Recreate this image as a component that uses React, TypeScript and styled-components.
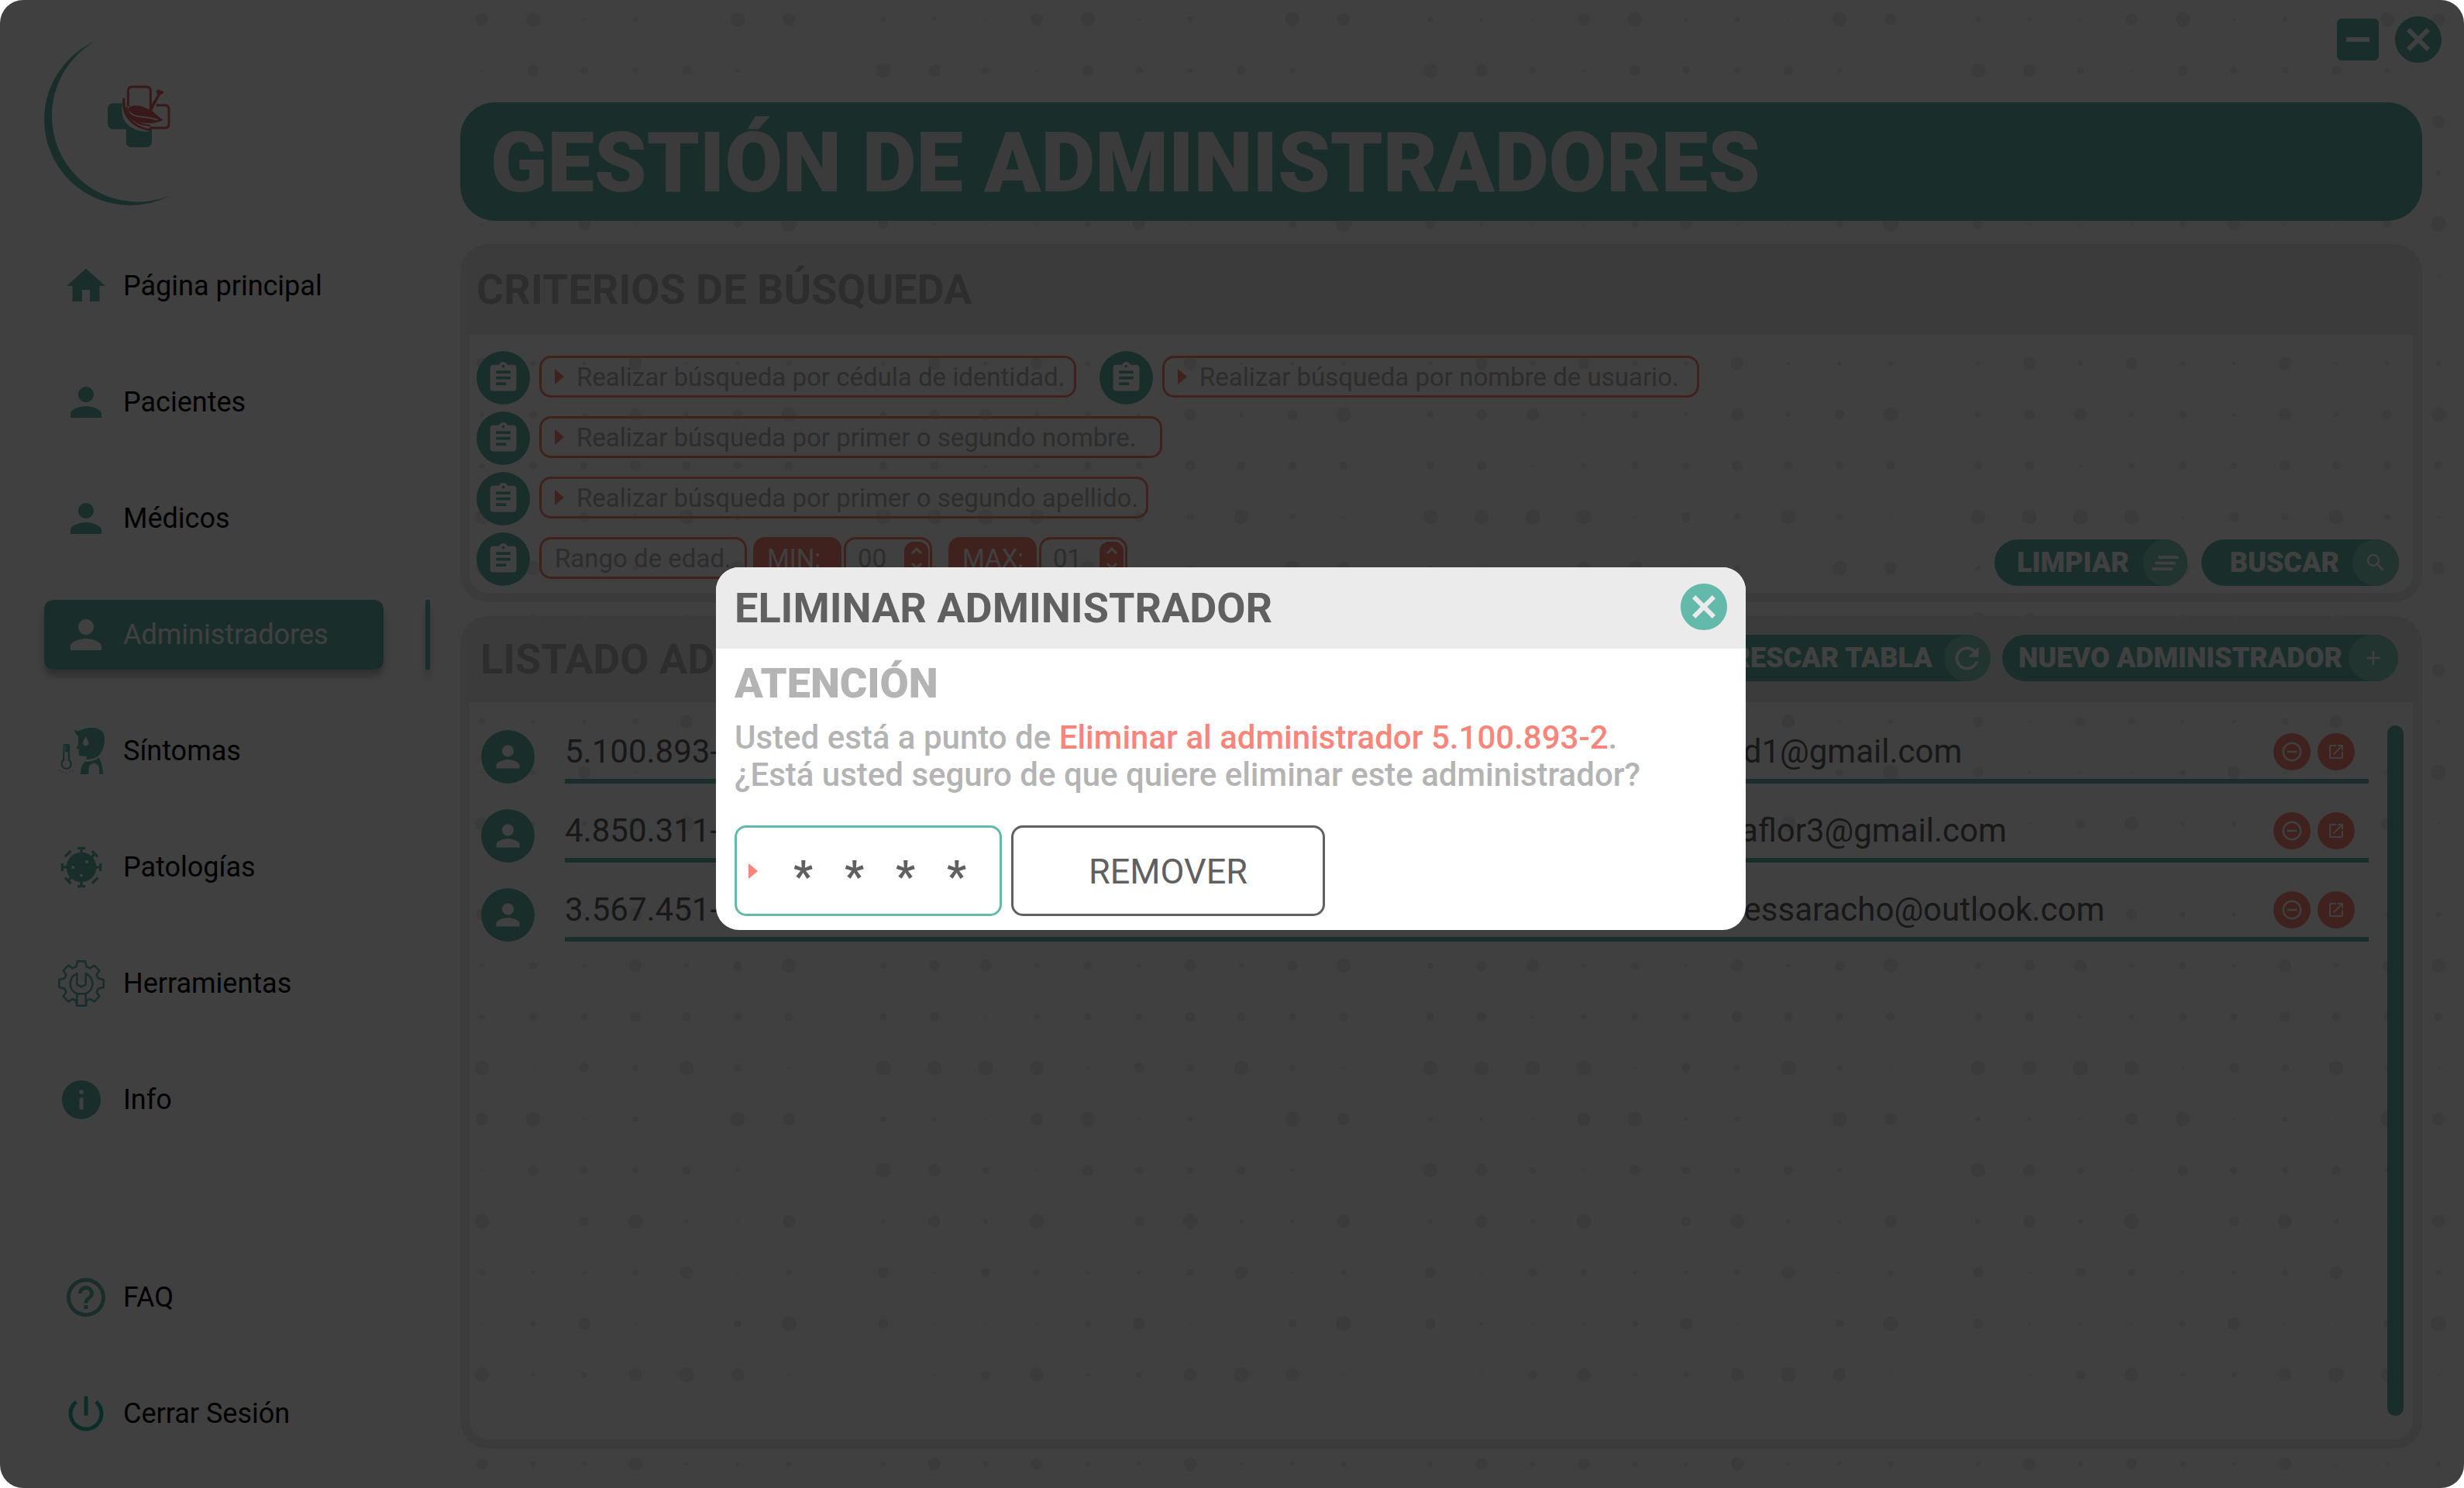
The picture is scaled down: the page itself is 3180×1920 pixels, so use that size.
import React from 'react';
import styled, { createGlobalStyle, css } from 'styled-components';
import {
  MdAdd,
  MdAssignment,
  MdCancel,
  MdClearAll,
  MdHelpOutline,
  MdHome,
  MdIndeterminateCheckBox,
  MdInfo,
  MdOpenInNew,
  MdPerson,
  MdPowerSettingsNew,
  MdRefresh,
  MdRemoveCircleOutline,
  MdSearch,
} from 'react-icons/md';

const color = {
  teal: '#63b9aa',
  tealSoft: '#88d0c0',
  coral: '#fa857a',
  panel: '#ebebeb',
  muted: '#b4b4b4',
  ink: '#606060',
  white: '#ffffff',
};

const GlobalStyle = createGlobalStyle`
  *, *::before, *::after { box-sizing: border-box; }
  body {
    margin: 0;
    background: #ffffff;
    font-family: Roboto, "Liberation Sans", sans-serif;
    font-size: 36px;
    color: #000000;
  }
  button, input { font-family: inherit; margin: 0; }
  button { cursor: pointer; }
`;

const Frame = styled.div`
  position: relative;
  display: flex;
  min-height: 100vh;
  border-radius: 30px;
  overflow: hidden;
  background: ${color.white};
`;

/* ---------- sidebar ---------- */

const Sidebar = styled.aside`
  display: flex;
  flex-direction: column;
  flex: 0 0 594px;
  padding: 48px 39px 51px 57px;
`;

const Logo = styled.svg`
  display: block;
  width: 180px;
  height: 222px;
  margin-bottom: 54px;
  overflow: visible;
`;

const Nav = styled.nav`
  display: flex;
  flex-direction: column;
  flex: 1;
  gap: 60px;
`;

const NavRow = styled.div<{ $pushed?: boolean }>`
  display: flex;
  justify-content: space-between;
  height: 90px;
  ${(p) => p.$pushed && css`margin-top: auto;`}
`;

const activeShadow = css`
  background: ${color.teal};
  box-shadow: 0 9px 9px rgba(0, 0, 0, 0.25);
`;

const NavLink = styled.a<{ $active?: boolean }>`
  display: flex;
  align-items: center;
  width: 438px;
  border-radius: 12px;
  color: #000000;
  text-decoration: none;
  ${(p) => p.$active && activeShadow}
  ${(p) => p.$active && css`color: ${color.white};`}
`;

const NavMarker = styled.span`
  width: 6px;
  border-radius: 2px;
  ${activeShadow}
`;

const NavIcon = styled.span<{ $wide?: boolean; $active?: boolean }>`
  display: flex;
  width: 102px;
  padding-left: ${(p) => (p.$wide ? 18 : 24)}px;
  color: ${(p) => (p.$active ? color.white : color.teal)};
  svg { width: 60px; height: 60px; }
`;

const PowerIcon = styled(MdPowerSettingsNew)`
  color: #28b39a;
`;

/* ---------- main column ---------- */

const Main = styled.main`
  position: relative;
  display: flex;
  flex: 1;
  flex-direction: column;
  min-width: 0;
`;

const Dots = styled.svg`
  position: absolute;
  inset: 0;
  width: 100%;
  height: 100%;
  fill: ${color.panel};
`;

const WindowBar = styled.header`
  position: relative;
  display: flex;
  justify-content: flex-end;
  gap: 6px;
  height: 132px;
  padding: 15px 23px 0 0;
`;

const IconButton = styled.button`
  display: block;
  width: 72px;
  height: 72px;
  padding: 0;
  border: 0;
  background: none;
  color: ${color.teal};
  svg { display: block; width: 72px; height: 72px; }
`;

const Content = styled.div`
  position: relative;
  display: flex;
  flex: 1;
  flex-direction: column;
  padding: 0 54px 51px 0;
`;

const PageTitle = styled.h1`
  margin: 0 0 30px;
  padding: 4px 0 0 39px;
  border-radius: 45px;
  background: ${color.teal};
  color: ${color.panel};
  font-size: 108px;
  font-weight: 900;
  line-height: 149px;
`;

const Panel = styled.section<{ $fill?: boolean }>`
  display: flex;
  flex-direction: column;
  flex: ${(p) => (p.$fill ? '1' : 'none')};
  border: 12px solid ${color.panel};
  border-top: 0;
  border-radius: 36px;
  overflow: hidden;
  & + & { margin-top: 18px; }
`;

const PanelHeader = styled.div<{ $tall?: boolean }>`
  display: flex;
  align-items: center;
  justify-content: space-between;
  height: ${(p) => (p.$tall ? 111 : 117)}px;
  padding: 0 19px 3px ${(p) => (p.$tall ? 14 : 9)}px;
  background: ${color.panel};
`;

const headingText = css`
  margin: 0;
  padding-top: 4px;
  font-size: 54px;
  font-weight: 700;
  line-height: 66px;
`;

const PanelTitle = styled.h2`
  ${headingText}
  color: ${color.muted};
`;

const Actions = styled.div<{ $gap: number }>`
  display: flex;
  gap: ${(p) => p.$gap}px;
`;

const Pill = styled.button<{ $left: number; $gap: number }>`
  display: flex;
  align-items: center;
  gap: ${(p) => p.$gap}px;
  height: 60px;
  padding: 0 0 0 ${(p) => p.$left}px;
  border: 0;
  border-radius: 30px;
  background: ${color.teal};
  color: ${color.white};
  font-size: 36px;
  font-weight: 900;
  white-space: nowrap;
`;

const PillIcon = styled.span<{ $width: number; $size: number }>`
  display: flex;
  align-items: center;
  justify-content: center;
  width: ${(p) => p.$width}px;
  height: 60px;
  border-radius: 50%;
  background: ${color.tealSoft};
  svg { width: ${(p) => p.$size}px; height: ${(p) => p.$size}px; }
`;

/* ---------- search form ---------- */

const SearchForm = styled.form`
  display: flex;
  align-items: flex-end;
  justify-content: space-between;
  padding: 21px 18px 9px 9px;
`;

const Fields = styled.div`
  display: flex;
  flex-direction: column;
  gap: 9px;
`;

const FieldRow = styled.div`
  display: flex;
  gap: 30px;
`;

const Field = styled.div`
  display: flex;
  gap: 12px;
`;

const Disc = styled.span`
  display: flex;
  align-items: center;
  justify-content: center;
  width: 69px;
  height: 69px;
  border-radius: 50%;
  background: ${color.teal};
  color: ${color.white};
  svg { width: 45px; height: 45px; }
`;

const boxStyle = css`
  display: flex;
  align-items: center;
  height: 54px;
  margin-top: 6px;
  border: 3px solid ${color.coral};
  border-radius: 15px;
  font-size: 33px;
`;

const FieldBox = styled.label<{ $width: number }>`
  ${boxStyle}
  gap: 16px;
  width: ${(p) => p.$width}px;
  padding-left: 17px;
  color: ${color.muted};
`;

const FieldInput = styled.input`
  flex: 1;
  min-width: 0;
  padding: 0;
  border: 0;
  outline: 0;
  background: none;
  color: ${color.muted};
  font-size: 33px;
  &::placeholder { color: ${color.muted}; opacity: 1; }
`;

const Arrow = styled.svg`
  flex: none;
  width: 12px;
  height: 20px;
  fill: ${color.coral};
`;

const AgeGroup = styled.div`
  display: flex;
  gap: 8px;
`;

const AgePair = styled.div`
  display: flex;
  gap: 3px;
  & + & { margin-left: 13px; }
`;

const AgeLabel = styled.label`
  ${boxStyle}
  width: 114px;
  padding-left: 15px;
  background: ${color.coral};
  color: ${color.white};
`;

const AgeBox = styled.div`
  ${boxStyle}
  width: 114px;
  padding: 0 2px 0 15px;
`;

const Stepper = styled.span`
  display: flex;
  flex-direction: column;
  width: 31px;
  height: 42px;
  border-radius: 12px;
  overflow: hidden;
  background: ${color.coral};
`;

const StepButton = styled.button`
  display: flex;
  flex: 1;
  align-items: center;
  justify-content: center;
  padding: 0;
  border: 0;
  background: none;
  svg { width: 18px; height: 12px; fill: none; stroke: ${color.white}; stroke-width: 3; }
`;

/* ---------- table ---------- */

const ListBody = styled.div`
  display: flex;
  flex: 1;
  align-items: flex-start;
  gap: 24px;
  padding: 3px 12px 0 15px;
`;

const Table = styled.table`
  flex: 1;
  table-layout: fixed;
  border-collapse: separate;
  border-spacing: 0 33px;
  color: ${color.ink};
  font-size: 42px;
`;

const DiscCell = styled.td`
  width: 108px;
  padding: 0;
`;

const Cell = styled.td<{ $width?: number }>`
  width: ${(p) => (p.$width ? `${p.$width}px` : 'auto')};
  height: 69px;
  padding: 1px 0 8px;
  border-bottom: 6px solid ${color.teal};
  line-height: 54px;
  white-space: nowrap;
`;

const RowActions = styled.div`
  display: flex;
  justify-content: flex-end;
  gap: 9px;
  padding-right: 18px;
`;

const RowButton = styled.button<{ $size: number }>`
  display: flex;
  align-items: center;
  justify-content: center;
  width: 48px;
  height: 48px;
  padding: 0;
  border: 0;
  border-radius: 50%;
  background: ${color.coral};
  color: ${color.white};
  svg { width: ${(p) => p.$size}px; height: ${(p) => p.$size}px; }
`;

const ScrollThumb = styled.div`
  align-self: stretch;
  width: 21px;
  margin: 27px 0 30px;
  border-radius: 11px;
  background: ${color.teal};
`;

/* ---------- modal ---------- */

const Overlay = styled.div`
  position: absolute;
  inset: 0;
  display: flex;
  align-items: center;
  justify-content: center;
  padding: 12px 3px 0 0;
  background: rgba(0, 0, 0, 0.75);
`;

const Modal = styled.section`
  width: 1329px;
  border-radius: 30px;
  overflow: hidden;
  background: ${color.white};
`;

const ModalHeader = styled.div`
  display: flex;
  align-items: center;
  justify-content: space-between;
  height: 105px;
  padding: 0 18px 3px 24px;
  background: ${color.panel};
`;

const ModalTitle = styled.h2`
  ${headingText}
  color: ${color.ink};
`;

const ModalBody = styled.form`
  padding: 12px 24px 18px;
`;

const Warning = styled.h3`
  margin: 0 0 13px;
  color: ${color.muted};
  font-size: 54px;
  font-weight: 900;
  line-height: 66px;
`;

const Message = styled.p`
  margin: 0 0 41px;
  color: ${color.muted};
  font-size: 42px;
  font-weight: 500;
  line-height: 48px;
  strong { color: ${color.coral}; font-weight: 500; }
`;

const ModalActions = styled.div`
  display: flex;
  gap: 12px;
`;

const PinBox = styled.label`
  display: flex;
  align-items: center;
  gap: 46px;
  width: 345px;
  height: 117px;
  padding-left: 15px;
  border: 3px solid ${color.teal};
  border-radius: 15px;
`;

const PinInput = styled.input`
  flex: 1;
  min-width: 0;
  padding: 14px 0 0;
  border: 0;
  outline: 0;
  background: none;
  color: ${color.ink};
  font-size: 55px;
  font-weight: 700;
`;

const RemoveButton = styled.button`
  width: 405px;
  height: 117px;
  padding: 2px 0 0;
  border: 3px solid ${color.ink};
  border-radius: 15px;
  background: ${color.white};
  color: ${color.ink};
  font-size: 45px;
`;

/* ---------- drawings ---------- */

const dotTile = [
  [3, 8, 3.5, 7.5, 3.5, 2.5, 8.5, 2, 2.5, 3.5],
  [4, 7, 8, 3, 5, 2.5, 8, 3, 6.5, 9.5],
  [5, 6, 2, 3.5, 5, 4.5, 7, 5.5, 5, 5.5],
  [9.5, 9.5, 10, 9.5, 1.5, 6.5, 4.5, 9.5, 4, 1.5],
  [3.5, 2.5, 1.5, 8, 9.5, 2, 3.5, 1, 9.5, 8],
  [9.5, 8, 4.5, 1.5, 7, 5, 4, 6, 3, 0],
  [3, 8, 3, 10, 0, 6.5, 9.5, 3, 2, 8.5],
  [7, 1.5, 6, 4.5, 2.5, 2.5, 4, 8.5, 1.5, 3.5],
  [6.5, 2, 1.5, 1.5, 4, 8, 1.5, 1, 5, 10],
  [0, 1.5, 6, 9, 3, 3.5, 8.5, 10, 8.5, 1.5],
];

const DotPattern = () => (
  <Dots aria-hidden="true">
    <defs>
      <g id="dot-tile">
        {dotTile.map((row, y) =>
          row.map((r, x) => <circle key={`${x}-${y}`} cx={x * 66} cy={y * 66} r={r} />),
        )}
      </g>
    </defs>
    {[-170, 546, 1252, 1959].map((x) =>
      [-239, 469, 1180, 1889].map((y) => <use key={`${x}-${y}`} href="#dot-tile" x={x} y={y} />),
    )}
  </Dots>
);

const BrandLogo = () => (
  <Logo viewBox="57 48 180 222" role="img" aria-label="Logo">
    <path
      fill={color.teal}
      d="M123 53A111 111 0 0 0 57 154A111 111 0 0 0 168 265A111 111 0 0 0 220 252A111 111 0 0 1 178 260.5A111 111 0 0 1 67 149.5A111 111 0 0 1 123 53Z"
    />
    <g transform="translate(120 90) scale(.33333)">
      <rect x="57" y="130" width="110" height="100" rx="20" fill={color.teal} />
      <rect x="128" y="180" width="100" height="120" rx="20" fill={color.teal} />
      <path
        fill={color.white}
        d="M118 60H310V226H250C215 250 160 240 130 208C112 186 106 150 118 110Z"
      />
      <path
        fill="none"
        stroke="#dd6262"
        strokeWidth="9"
        strokeLinejoin="round"
        d="M136 142V82Q136 66 152 66H206Q223 66 223 82V150M245 137H278Q294 137 294 153V209Q294 225 278 225H222V236"
      />
      <path
        fill="#dd6262"
        d="M216 153L250 96L244 84L252 76L274 84L270 93L260 97L228 158C240 168 252 182 272 194C240 212 190 212 160 192C142 180 134 160 138 146C160 132 192 140 216 153Z"
      />
      <path
        fill="none"
        stroke={color.white}
        strokeWidth="5"
        d="M136 158C152 182 185 182 206 184C226 186 236 190 250 194"
      />
      <path
        fill="#dd6262"
        d="M116 108C108 160 128 220 222 238V229C160 220 122 180 124 112ZM128 140C130 190 170 216 222 219V213C176 208 142 184 134 146Z"
      />
    </g>
  </Logo>
);

const SymptomsIcon = () => (
  <svg viewBox="45 42 180 180" fill="currentColor" aria-hidden="true">
    <path
      fillRule="evenodd"
      d="M109 49C118 58 130 52 145 47C165 40 190 38 206 50C222 54 226 74 225 92C224 118 212 142 200 152C188 160 172 164 155 165V153L130 151C124 148 126 140 124 134L126 126L114 121L123 107V73C116 70 108 60 109 49ZM152 76C146 88 141 94 141 101A11 11 0 0 0 163 101C163 94 158 88 152 76Z"
    />
    <path d="M132 222C132 198 139 182 148 174C168 174 188 168 203 158C213 176 219 196 219 222H204V203C204 172 163 172 163 203V222Z" />
    <path d="M63 112Q63 105 70 105H84Q91 105 91 112V165A22 22 0 1 1 63 165ZM70 136V169A15 15 0 1 0 83 169V136Z" fillRule="evenodd" />
    <path d="M61 113H74M61 121H78M61 129H74" stroke={color.white} strokeWidth="3" />
    <circle cx="50" cy="208" r="2.5" />
    <circle cx="62" cy="213" r="2.5" />
    <circle cx="76" cy="217" r="2.5" />
    <circle cx="90" cy="213" r="2.5" />
    <circle cx="102" cy="208" r="2.5" />
  </svg>
);

const VirusIcon = () => (
  <svg viewBox="-90 -90 180 180" aria-hidden="true">
    <circle r="58" fill="currentColor" />
    <g stroke="currentColor" strokeWidth="10" fill="none">
      <path d="M-15-74H15M0-74V-50M-15 74H15M0 74V50M-74-15V15M-74 0H-50M74-15V15M74 0H50" />
      <path d="M41-63L63-41M52-52L38-38M-41 63L-63 41M-52 52L-38 38M-41-63L-64-40M41 63L64 40" />
    </g>
    <path fill={color.white} d="M-37-5H-27V5H-37ZM16-26H26V-16H16ZM-5 27H5V37H-5Z" />
  </svg>
);

const GearIcon = () => (
  <svg viewBox="-90 -90 180 180" fill="none" stroke="currentColor" strokeWidth="8" strokeLinejoin="round" aria-hidden="true">
    <path d="M-18 86L-21 66L-34 60L-50 70L-70 50L-59 34L-65 20L-86 15V-15L-65-20L-59-34L-70-50L-50-70L-34-59L-20-65L-15-86H15L20-65L34-59L50-70L70-50L59-34L65-20L86-15V15L65 20L59 34L70 50L50 70L34 60L21 66L18 86Z" />
    <path d="M-17-39V4L0 13L17 4V-39A43 43 0 0 1 17 40H-17A43 43 0 0 1-17-39Z" />
    <path d="M-17 42V84M17 42V84" />
  </svg>
);

const FieldArrow = () => (
  <Arrow viewBox="0 0 12 20" aria-hidden="true">
    <path d="M0 0L12 10L0 20Z" />
  </Arrow>
);

/* ---------- data ---------- */

const navItems = [
  { label: 'Página principal', icon: <MdHome /> },
  { label: 'Pacientes', icon: <MdPerson /> },
  { label: 'Médicos', icon: <MdPerson /> },
  { label: 'Administradores', icon: <MdPerson />, active: true },
  { label: 'Síntomas', icon: <SymptomsIcon />, wide: true },
  { label: 'Patologías', icon: <VirusIcon />, wide: true },
  { label: 'Herramientas', icon: <GearIcon />, wide: true },
  { label: 'Info', icon: <MdInfo />, wide: true },
  { label: 'FAQ', icon: <MdHelpOutline />, pushed: true },
  { label: 'Cerrar Sesión', icon: <PowerIcon /> },
];

const searchRows = [
  [
    { text: 'Realizar búsqueda por cédula de identidad.', width: 693 },
    { text: 'Realizar búsqueda por nombre de usuario.', width: 693 },
  ],
  [{ text: 'Realizar búsqueda por primer o segundo nombre.', width: 804 }],
  [{ text: 'Realizar búsqueda por primer o segundo apellido.', width: 786 }],
];

const ages = [
  { id: 'age-min', label: 'MIN:', value: '00' },
  { id: 'age-max', label: 'MAX:', value: '01' },
];

const admins = [
  { id: '5.100.893-2', name: 'David Pérez', email: 'david1@gmail.com' },
  { id: '4.850.311-5', name: 'Mara Flor', email: 'maraflor3@gmail.com' },
  { id: '3.567.451-1', name: 'Wanessa Racho', email: 'wanessaracho@outlook.com' },
];

export default function App() {
  return (
    <>
      <GlobalStyle />
      <Frame>
        <Sidebar>
          <BrandLogo />
          <Nav>
            {navItems.map((item) => (
              <NavRow key={item.label} $pushed={item.pushed}>
                <NavLink href="#" $active={item.active}>
                  <NavIcon $wide={item.wide} $active={item.active}>{item.icon}</NavIcon>
                  {item.label}
                </NavLink>
                {item.active && <NavMarker />}
              </NavRow>
            ))}
          </Nav>
        </Sidebar>

        <Main>
          <DotPattern />
          <WindowBar>
            <IconButton type="button" aria-label="Minimizar"><MdIndeterminateCheckBox /></IconButton>
            <IconButton type="button" aria-label="Cerrar ventana"><MdCancel /></IconButton>
          </WindowBar>

          <Content>
            <PageTitle>GESTIÓN DE ADMINISTRADORES</PageTitle>

            <Panel>
              <PanelHeader>
                <PanelTitle>CRITERIOS DE BÚSQUEDA</PanelTitle>
              </PanelHeader>
              <SearchForm>
                <Fields>
                  {searchRows.map((row) => (
                    <FieldRow key={row[0].text}>
                      {row.map((field) => (
                        <Field key={field.text}>
                          <Disc><MdAssignment /></Disc>
                          <FieldBox $width={field.width}>
                            <FieldArrow />
                            <FieldInput placeholder={field.text} aria-label={field.text} />
                          </FieldBox>
                        </Field>
                      ))}
                    </FieldRow>
                  ))}
                  <Field>
                    <Disc><MdAssignment /></Disc>
                    <AgeGroup>
                      <FieldBox as="span" $width={268}>Rango de edad.</FieldBox>
                      {ages.map((age) => (
                        <AgePair key={age.id}>
                          <AgeLabel htmlFor={age.id}>{age.label}</AgeLabel>
                          <AgeBox>
                            <FieldInput id={age.id} inputMode="numeric" defaultValue={age.value} />
                            <Stepper>
                              <StepButton type="button" aria-label="Aumentar">
                                <svg viewBox="0 0 18 12"><path d="M3 10L9 4L15 10" /></svg>
                              </StepButton>
                              <StepButton type="button" aria-label="Disminuir">
                                <svg viewBox="0 0 18 12"><path d="M3 2L9 8L15 2" /></svg>
                              </StepButton>
                            </Stepper>
                          </AgeBox>
                        </AgePair>
                      ))}
                    </AgeGroup>
                  </Field>
                </Fields>
                <Actions $gap={18}>
                  <Pill type="reset" $left={29} $gap={18}>
                    LIMPIAR
                    <PillIcon $width={57} $size={45}><MdClearAll /></PillIcon>
                  </Pill>
                  <Pill type="submit" $left={37} $gap={17}>
                    BUSCAR
                    <PillIcon $width={60} $size={30}><MdSearch /></PillIcon>
                  </Pill>
                </Actions>
              </SearchForm>
            </Panel>

            <Panel $fill>
              <PanelHeader $tall>
                <PanelTitle>LISTADO ADMINISTRADORES</PanelTitle>
                <Actions $gap={15}>
                  <Pill type="button" $left={21} $gap={15}>
                    REFRESCAR TABLA
                    <PillIcon $width={60} $size={45}><MdRefresh /></PillIcon>
                  </Pill>
                  <Pill type="button" $left={21} $gap={8}>
                    NUEVO ADMINISTRADOR
                    <PillIcon $width={64} $size={30}><MdAdd /></PillIcon>
                  </Pill>
                </Actions>
              </PanelHeader>
              <ListBody>
                <Table>
                  <tbody>
                    {admins.map((admin) => (
                      <tr key={admin.id}>
                        <DiscCell><Disc><MdPerson /></Disc></DiscCell>
                        <Cell $width={471}>{admin.id}</Cell>
                        <Cell $width={973}>{admin.name}</Cell>
                        <Cell>{admin.email}</Cell>
                        <Cell $width={160}>
                          <RowActions>
                            <RowButton type="button" $size={30} aria-label={`Eliminar ${admin.id}`}>
                              <MdRemoveCircleOutline />
                            </RowButton>
                            <RowButton type="button" $size={24} aria-label={`Abrir ${admin.id}`}>
                              <MdOpenInNew />
                            </RowButton>
                          </RowActions>
                        </Cell>
                      </tr>
                    ))}
                  </tbody>
                </Table>
                <ScrollThumb />
              </ListBody>
            </Panel>
          </Content>
        </Main>

        <Overlay>
          <Modal role="dialog" aria-modal="true" aria-labelledby="modal-title">
            <ModalHeader>
              <ModalTitle id="modal-title">ELIMINAR ADMINISTRADOR</ModalTitle>
              <IconButton type="button" aria-label="Cerrar"><MdCancel /></IconButton>
            </ModalHeader>
            <ModalBody>
              <Warning>ATENCIÓN</Warning>
              <Message>
                Usted está a punto de <strong>Eliminar al administrador 5.100.893-2</strong>.
                <br />
                ¿Está usted seguro de que quiere eliminar este administrador?
              </Message>
              <ModalActions>
                <PinBox>
                  <FieldArrow />
                  <PinInput aria-label="PIN de confirmación" defaultValue="*   *   *   *" />
                </PinBox>
                <RemoveButton type="button">REMOVER</RemoveButton>
              </ModalActions>
            </ModalBody>
          </Modal>
        </Overlay>
      </Frame>
    </>
  );
}
